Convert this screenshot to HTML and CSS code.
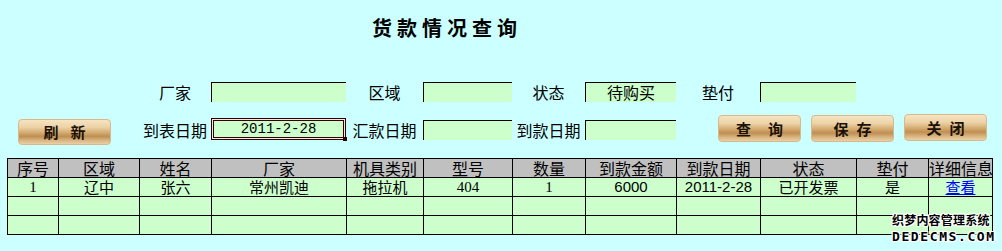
FILE: index.html
```html
<!DOCTYPE html>
<html lang="zh-CN">
<head>
<meta charset="utf-8">
<title>货款情况查询</title>
<link rel="stylesheet" href="styles.css">
</head>
<body>
<div class="page">
  <h1 class="title">货款情况查询</h1>

  <div class="form">
    <div class="blank span-2"></div>
    <span class="lbl">厂家</span>
    <div class="field"></div>
    <span class="lbl">区域</span>
    <div class="field"></div>
    <span class="lbl">状态</span>
    <div class="field">待购买</div>
    <span class="lbl">垫付</span>
    <div class="field"></div>
    <div class="blank span-end"></div>

    <div class="btn-cell span-2"><button class="btn btn-refresh" type="button"><span>刷</span><span>新</span></button></div>
    <span class="lbl">到表日期</span>
    <div class="field field-focus num">2011-2-28</div>
    <span class="lbl">汇款日期</span>
    <div class="field"></div>
    <span class="lbl">到款日期</span>
    <div class="field"></div>
    <div class="actions">
      <button class="btn btn-wide" type="button"><span>查</span><span>询</span></button>
      <button class="btn" type="button"><span>保</span><span>存</span></button>
      <button class="btn btn-close" type="button"><span>关</span><span>闭</span></button>
    </div>
  </div>

  <table class="grid">
    <colgroup>
      <col class="c1"><col class="c2"><col class="c3"><col class="c4"><col class="c5"><col class="c6">
      <col class="c7"><col class="c8"><col class="c9"><col class="c10"><col class="c11"><col class="c12">
    </colgroup>
    <thead>
      <tr>
        <th>序号</th><th>区域</th><th>姓名</th><th>厂家</th><th>机具类别</th><th>型号</th>
        <th>数量</th><th>到款金额</th><th>到款日期</th><th>状态</th><th>垫付</th><th>详细信息</th>
      </tr>
    </thead>
    <tbody>
      <tr>
        <td class="serif">1</td><td>辽中</td><td>张六</td><td>常州凯迪</td><td>拖拉机</td><td class="serif">404</td>
        <td class="serif">1</td><td class="sans">6000</td><td class="sans">2011-2-28</td><td>已开发票</td><td>是</td><td><a href="#">查看</a></td>
      </tr>
      <tr><td></td><td></td><td></td><td></td><td></td><td></td><td></td><td></td><td></td><td></td><td></td><td></td></tr>
      <tr><td></td><td></td><td></td><td></td><td></td><td></td><td></td><td></td><td></td><td></td><td></td><td></td></tr>
    </tbody>
  </table>

  <div class="watermark">
    <span class="wm-cn">织梦内容管理系统</span>
    <span class="wm-en">DEDECMS.COM</span>
  </div>
</div>
</body>
</html>
```

FILE: styles.css
```css
html, body {
  margin: 0;
  padding: 0;
  background: #ccffff;
}

body {
  font-family: "Noto Sans CJK SC", "DejaVu Sans", sans-serif;
  font-size: 16px;
  color: #000;
}

.page {
  position: relative;
  width: 1002px;
  height: 251px;
  padding: 0 0 0 7px;
  box-sizing: border-box;
  overflow: hidden;
}

.title {
  margin: 0 0 0 365px;
  padding-top: 13px;
  height: 29px;
  line-height: 29px;
  font-size: 20px;
  font-weight: bold;
  letter-spacing: 5px;
}

.form {
  margin-top: 40px;
  display: grid;
  grid-template-columns: 51px 81px 72px 135px 77px 89px 73px 91px 84px 96px 72px 64px;
  grid-template-rows: 20px 35px;
  row-gap: 10px;
  align-items: center;
}

.span-2 { grid-column: span 2; }
.span-end { grid-column: span 2; }

.lbl {
  text-align: center;
  line-height: 20px;
  white-space: nowrap;
}

.field {
  height: 20px;
  box-sizing: border-box;
  background: #ccffcc;
  border-top: 1px solid #000;
  border-left: 1px solid #000;
  text-align: center;
  line-height: 18px;
  font-size: 16px;
}

.field-focus {
  height: 22px;
  margin-top: -1px;
  border: 1px solid #330000;
  box-shadow: inset 0 0 0 1px #f4e8e8, inset 0 0 0 2px #330000;
  position: relative;
  line-height: 20px;
}

.field-focus::after {
  content: "";
  position: absolute;
  right: -2px;
  bottom: -2px;
  width: 4px;
  height: 4px;
  background: #330000;
}

.num {
  font-family: "Liberation Mono", monospace;
  font-size: 14px;
}

.btn-cell {
  display: flex;
  align-items: center;
  height: 35px;
}

.btn {
  display: flex;
  align-items: center;
  justify-content: center;
  gap: 8px;
  width: 83px;
  height: 27px;
  padding: 0;
  border: 1px solid #d8b98a;
  border-radius: 4px;
  background: linear-gradient(#f7e4c2 0%, #ecd2a6 30%, #d2a76c 55%, #bf8e52 68%, #d9b582 85%, #ead0a6 100%);
  font-family: "Noto Sans CJK SC", sans-serif;
  font-size: 15px;
  font-weight: bold;
  color: #1a1208;
  white-space: nowrap;
  line-height: 1;
}

.btn-wide {
  gap: 17px;
}

.btn-refresh {
  width: 93px;
  height: 26px;
  gap: 12px;
  margin: 4px 0 0 11px;
}

.actions {
  grid-column: 9 / 13;
  display: flex;
  gap: 10px;
  padding-left: 42px;
  align-items: center;
  height: 35px;
  margin-top: -3px;
}

.btn-close {
  margin-top: -2px;
}

.grid {
  margin-top: 11px;
  border-collapse: collapse;
  table-layout: fixed;
  width: 986px;
}

.c1 { width: 51px; }
.c2 { width: 81px; }
.c3 { width: 72px; }
.c4 { width: 135px; }
.c5 { width: 77px; }
.c6 { width: 89px; }
.c7 { width: 73px; }
.c8 { width: 91px; }
.c9 { width: 84px; }
.c10 { width: 96px; }
.c11 { width: 72px; }
.c12 { width: 64px; }

.grid th,
.grid td {
  border: 1px solid #000;
  height: 18px;
  padding: 0;
  line-height: 18px;
  text-align: center;
  font-weight: normal;
  white-space: nowrap;
}

.grid th {
  background: #c0c0c0;
  font-size: 16px;
}

.grid td {
  background: #ccffcc;
  font-size: 15px;
}

.grid td.serif {
  font-family: "Liberation Serif", serif;
  font-size: 15px;
}

.grid td.sans {
  font-family: "Liberation Sans", sans-serif;
  font-size: 15px;
}

.grid a {
  color: #0000ff;
  text-decoration: underline;
}

.watermark {
  position: absolute;
  left: 892px;
  top: 214px;
  display: flex;
  flex-direction: column;
  line-height: 1;
  font-weight: bold;
  color: #000;
  text-shadow: 1px 0 0 #fff, -1px 0 0 #fff, 0 1px 0 #fff, 0 -1px 0 #fff, 1px 1px 0 #fff, -1px -1px 0 #fff, 1px -1px 0 #fff, -1px 1px 0 #fff;
}

.wm-cn {
  font-size: 12px;
  letter-spacing: 0.2px;
  height: 16px;
}

.wm-en {
  font-family: "DejaVu Sans Mono", monospace;
  font-size: 13px;
  letter-spacing: 1.6px;
}
```
